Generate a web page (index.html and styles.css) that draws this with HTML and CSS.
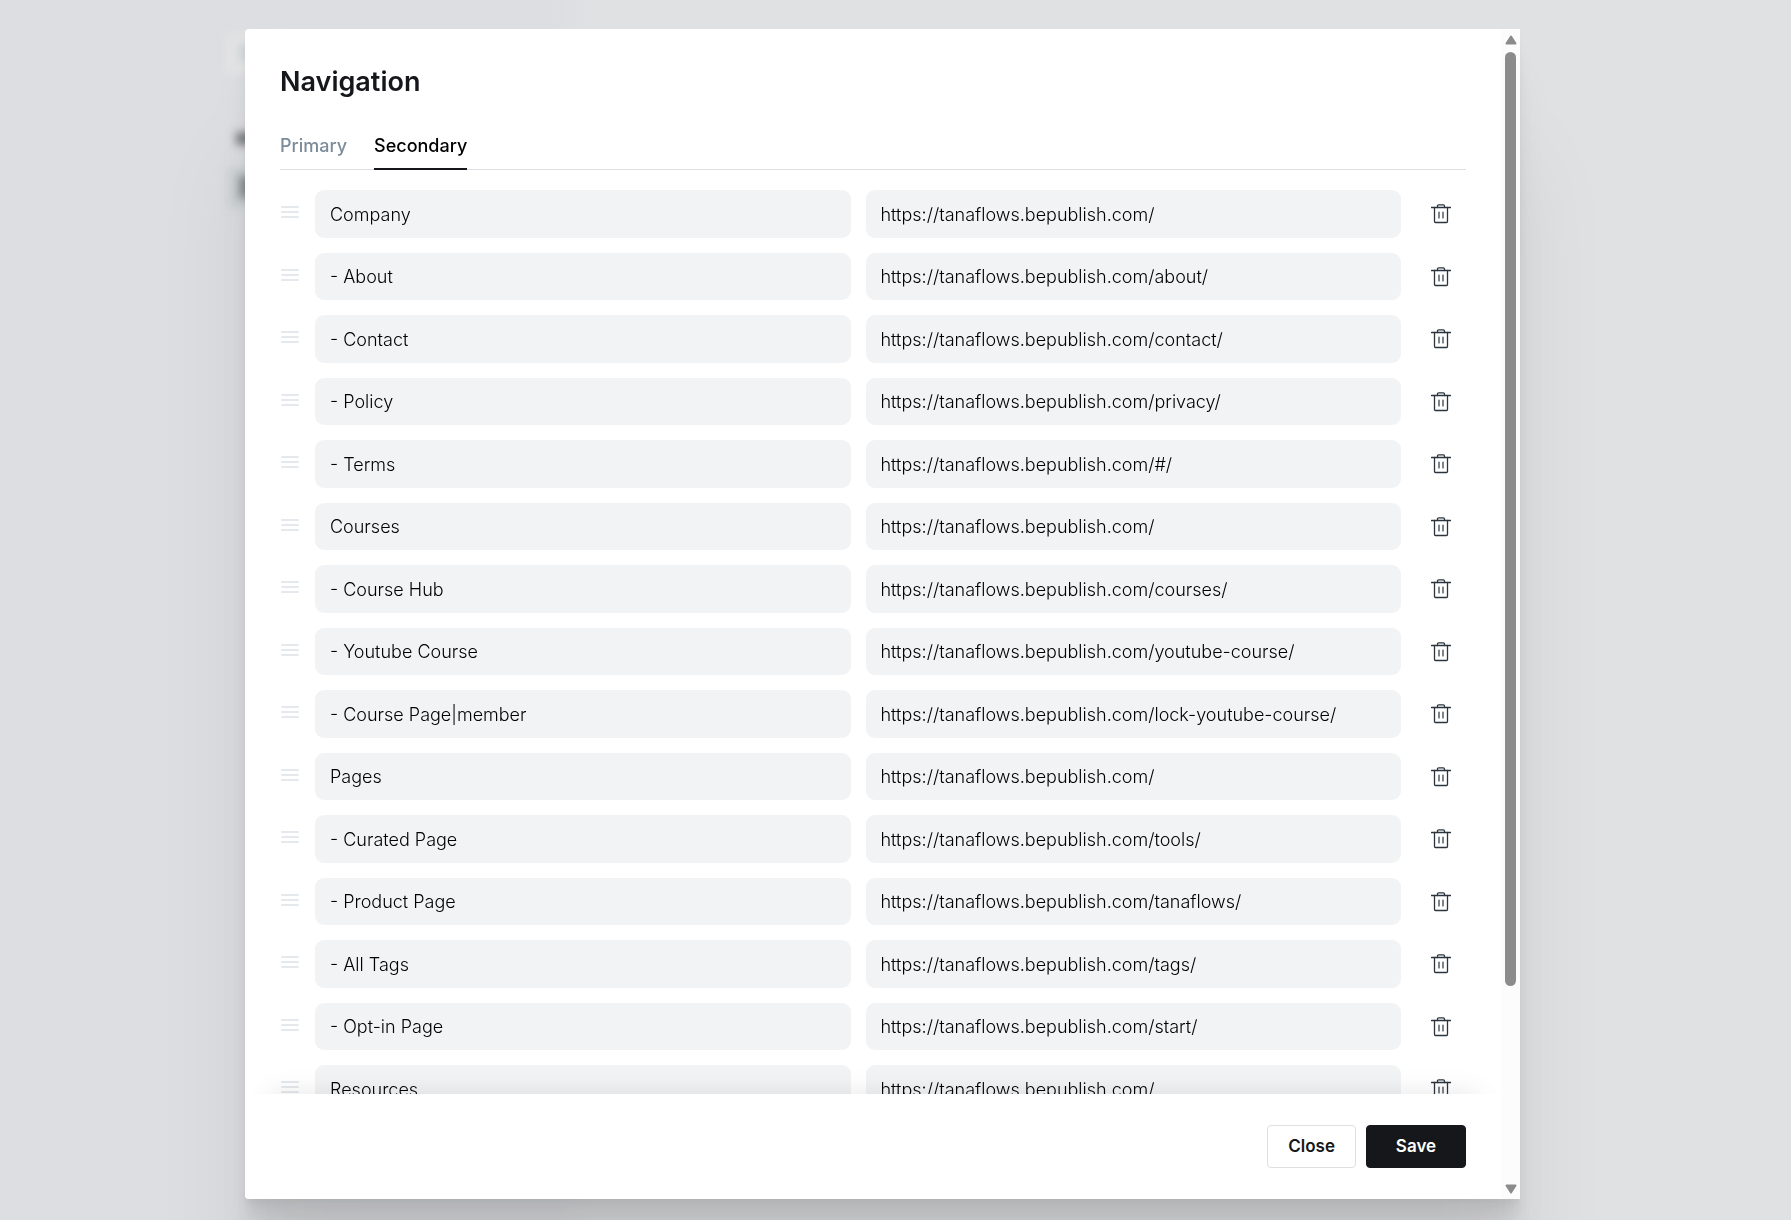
FILE: index.html
```html
<!DOCTYPE html>
<html lang="en">
<head>
<meta charset="utf-8">
<title>Navigation</title>
<link rel="stylesheet" href="styles.css">
</head>
<body>
<svg class="sprite" aria-hidden="true">
  <symbol id="grip" viewBox="0 0 18 12"><path d="M1 1h16M1 6h16M1 11h16" fill="none" stroke="currentColor" stroke-width="2" stroke-linecap="round"/></symbol>
  <symbol id="trash" viewBox="0 0 20 20"><g fill="none" stroke="currentColor" stroke-linecap="round" stroke-linejoin="round"><path d="M.5 3.500h19" stroke-width="1.300"/><path d="M3.500 3.500v14q0 1 1 1h11q1 0 1-1V3.500" stroke-width="1.300"/><path d="M6.500 3.500V2q0-1.200 1.200-1.200h4.600q1.200 0 1.200 1.200v1.500" stroke-width="1.300"/><path d="M8 8v6M12 8v6" stroke-width="1.200"/></g></symbol>
</svg>
<div class="page-behind" aria-hidden="true">
  <span class="blob blob-light"></span>
  <span class="blob blob-logo"></span>
  <span class="blob blob-title"></span>
  <span class="blob blob-halo"></span>
  <span class="blob blob-box"></span>
</div>
<main class="overlay">
  <section class="modal" role="dialog" aria-labelledby="modal-title">
    <div class="modal-main">
      <div class="modal-body">
        <h1 class="title" id="modal-title">Navigation</h1>
        <div class="tabs" role="tablist">
          <button class="tab" type="button" role="tab" aria-selected="false">Primary</button>
          <button class="tab tab-active" type="button" role="tab" aria-selected="true">Secondary</button>
        </div>
        <ul class="nav-list" id="nav-list"></ul>
      </div>
      <footer class="footer">
        <button class="btn" type="button">Close</button>
        <button class="btn btn-primary" type="button">Save</button>
      </footer>
    </div>
    <div class="scrollbar" aria-hidden="true">
      <svg class="arrow" viewBox="0 0 12 10"><path d="M6 1.500 10.500 8.500h-9z" fill="currentColor" stroke="currentColor" stroke-width="2" stroke-linejoin="round"/></svg>
      <div class="track"><div class="thumb"></div></div>
      <svg class="arrow" viewBox="0 0 12 10"><path d="M6 8.500 1.500 1.500h9z" fill="currentColor" stroke="currentColor" stroke-width="2" stroke-linejoin="round"/></svg>
    </div>
  </section>
</main>
<script src="script.js"></script>
</body>
</html>
```
FILE: styles.css
```css
* { box-sizing: border-box; }

body {
  margin: 0;
  font-family: Inter, "Liberation Sans", sans-serif;
  color: #15171a;
  background: #e0e1e3;
}

.sprite { display: none; }

/* Blurred page under the dialog */
.page-behind {
  position: fixed;
  inset: 0;
  overflow: hidden;
  background: linear-gradient(to right, #dddee1 555px, #e0e1e3 590px);
}

.blob { position: absolute; filter: blur(5px); }
.blob-light { left: 226px; top: 34px; width: 60px; height: 40px; background: #e2e3e4; }
.blob-logo { left: 239px; top: 43px; width: 40px; height: 18px; background: #cdd3d7; filter: blur(4px); }
.blob-title { left: 236px; top: 132px; width: 40px; height: 13px; background: #7b7d7f; filter: blur(4px); }
.blob-halo { left: 228px; top: 168px; width: 60px; height: 40px; background: #ccd2d5; }
.blob-box { left: 239px; top: 176px; width: 40px; height: 22px; background: #8b9093; filter: blur(4px); }

.overlay {
  position: relative;
  display: flex;
  height: 100vh;
  padding: 29px 271px 21px 245px;
  overflow: hidden;
}

.modal {
  display: flex;
  flex: 1;
  min-width: 0;
  border-radius: 4px 0 0 4px;
  background: #fff;
  box-shadow:
    0 4px 3px rgba(0, 0, 0, .02),
    0 8px 7px rgba(0, 0, 0, .028),
    0 16px 13px rgba(0, 0, 0, .035),
    0 28px 22px rgba(0, 0, 0, .042),
    0 52px 42px rgba(0, 0, 0, .05),
    0 125px 100px rgba(0, 0, 0, .07);
}

.modal-main {
  display: flex;
  flex: 1;
  flex-direction: column;
  min-width: 0;
  overflow: hidden;
  border-radius: 4px 0 0 4px;
}

.modal-body {
  flex: 1;
  min-height: 0;
  padding: 35px 35px 0;
  overflow: hidden;
}

.title {
  margin: 0;
  font-size: 27px;
  line-height: 35px;
  font-weight: 600;
}

.tabs {
  display: flex;
  gap: 27px;
  margin-top: 30px;
  border-bottom: 1px solid #dddfe2;
}

.tab {
  height: 41px;
  margin-bottom: -1px;
  padding: 0 0 5px;
  border: 0;
  border-bottom: 2px solid transparent;
  background: none;
  color: #7c8b9a;
  font: 500 18px/24px Inter, sans-serif;
}

.tab-active { border-color: #15171a; color: #000; }

.nav-list {
  display: grid;
  gap: 15px;
  margin: 20px 0 0;
  padding: 0;
  list-style: none;
}

.nav-row {
  display: grid;
  grid-template-columns: 20px 1fr 1fr 50px;
  column-gap: 15px;
  align-items: center;
  height: 48px;
}

.nav-row:nth-child(even) { height: 47px; }

.grip {
  width: 20px;
  height: 12px;
  margin-bottom: 4px;
  color: #e5e9ed;
}

.field {
  width: 100%;
  height: 100%;
  min-width: 0;
  padding: 0 15px;
  border: 0;
  border-radius: 9px;
  background: #f1f3f4;
  color: #000;
  font: 300 18px/24px Inter, sans-serif;
}

.delete {
  display: flex;
  justify-content: center;
  padding: 0;
  border: 0;
  background: none;
  color: #2b343d;
}

.delete svg { width: 20px; height: 20px; }

.footer {
  position: relative;
  display: flex;
  justify-content: flex-end;
  gap: 10px;
  padding: 31px 35px;
  background: #fff;
  box-shadow: 0 -24px 28px -24px rgba(0, 0, 0, .1);
}

.btn {
  height: 43px;
  padding: 0 20px 1px;
  border: 1px solid #dddfe2;
  border-radius: 4px;
  background: #fff;
  color: #15171a;
  font: 600 17px/24px Inter, sans-serif;
}

.btn-primary {
  min-width: 100px;
  border-color: #15171a;
  background: #15171a;
  color: #fff;
}

.scrollbar {
  display: flex;
  flex-direction: column;
  align-items: center;
  gap: 7px;
  width: 19px;
  padding: 6px 0 5px;
  background: #fcfcfc;
  color: #8b8b8b;
}

.arrow { width: 12px; height: 10px; }
.track { flex: 1; width: 11px; }
.thumb { height: 83%; border-radius: 6px; background: #8b8b8b; }
```
FILE: script.js
```javascript
const site = "https://tanaflows.bepublish.com/";
const items = [
  ["Company", ""],
  ["- About", "about/"],
  ["- Contact", "contact/"],
  ["- Policy", "privacy/"],
  ["- Terms", "#/"],
  ["Courses", ""],
  ["- Course Hub", "courses/"],
  ["- Youtube Course", "youtube-course/"],
  ["- Course Page|member", "lock-youtube-course/"],
  ["Pages", ""],
  ["- Curated Page", "tools/"],
  ["- Product Page", "tanaflows/"],
  ["- All Tags", "tags/"],
  ["- Opt-in Page", "start/"],
  ["Resources", ""]
];

document.getElementById("nav-list").innerHTML = items.map(([label, path]) => `
  <li class="nav-row">
    <svg class="grip" aria-hidden="true"><use href="#grip"/></svg>
    <input class="field" type="text" aria-label="Label" value="${label}">
    <input class="field" type="text" aria-label="URL for ${label}" value="${site}${path}">
    <button class="delete" type="button" aria-label="Delete ${label}"><svg aria-hidden="true"><use href="#trash"/></svg></button>
  </li>`).join("");
```
